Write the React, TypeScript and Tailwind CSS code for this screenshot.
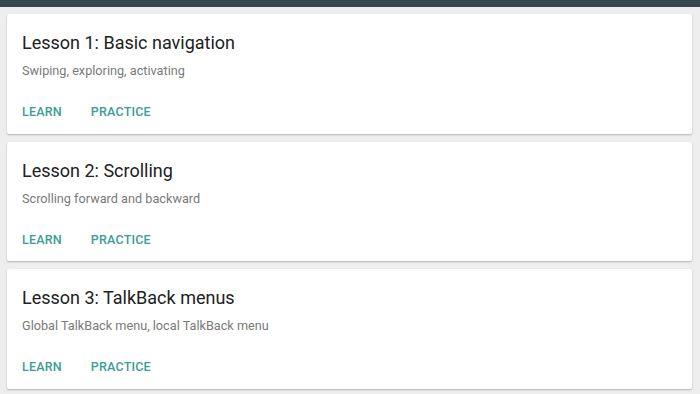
import React from 'react'

const lessons = [
  { title: 'Lesson 1: Basic navigation', subtitle: 'Swiping, exploring, activating' },
  { title: 'Lesson 2: Scrolling', subtitle: 'Scrolling forward and backward' },
  { title: 'Lesson 3: TalkBack menus', subtitle: 'Global TalkBack menu, local TalkBack menu' },
]

export default function App() {
  return (
    <div className="w-[700px] h-[394px] overflow-hidden bg-[#eeeeee] font-['Roboto',sans-serif]">
      <div className="h-[7px] bg-[#37474f]" />
      <div className="flex flex-col gap-[8px] pt-[7px] pl-[7px] pr-[8px]">
        {lessons.map((lesson) => (
          <div
            key={lesson.title}
            className="h-[119.5px] bg-white rounded-[2px] shadow-[0_1px_2px_rgba(0,0,0,0.25)] pl-[15px] pt-[17px]"
          >
            <h2 className="text-[18px] leading-[24px] text-[#212121]">{lesson.title}</h2>
            <p className="mt-[8px] text-[12.7px] leading-[16px] text-[#7a7a7a]">{lesson.subtitle}</p>
            <div className="mt-[25px] flex gap-[29px] text-[12.5px] leading-[16px] font-medium tracking-[0.2px] text-[#3a9e96]">
              <span>LEARN</span>
              <span>PRACTICE</span>
            </div>
          </div>
        ))}
      </div>
    </div>
  )
}
